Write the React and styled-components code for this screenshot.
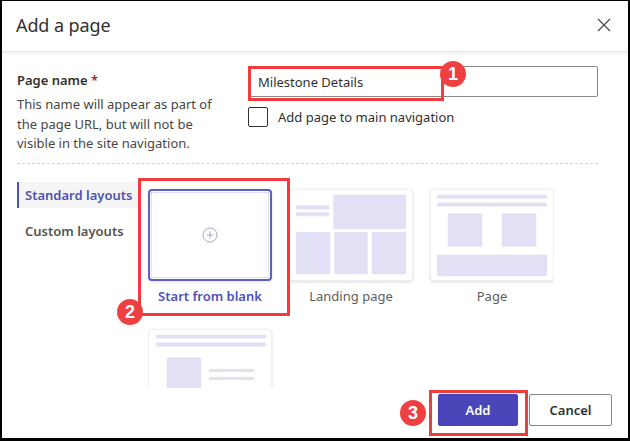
import React from "react";
import styled, { createGlobalStyle } from "styled-components";

const Global = createGlobalStyle`
  html, body { margin: 0; padding: 0; background: #fff; }
  body { font-family: "Noto Sans", "Liberation Sans", sans-serif; color: #323130; }
  * { box-sizing: border-box; }
`;

const Frame = styled.div`
  position: relative;
  width: 630px;
  height: 441px;
  border: 2px solid #000;
  border-top-width: 1px;
  border-bottom-width: 3px;
  display: flex;
  flex-direction: column;
  overflow: hidden;
  background: #fff;
`;

const Header = styled.header`
  height: 51px;
  flex: none;
  display: flex;
  align-items: center;
  justify-content: space-between;
  padding: 0 14px 2px 14px;
  border-bottom: 1px solid #e6e6e6;
  box-shadow: 0 2px 3px rgba(0, 0, 0, 0.06);
`;

const Title = styled.h1`
  margin: 0;
  font-size: 18px;
  font-weight: 400;
  color: #323130;
  letter-spacing: -0.1px;
`;

const Close = styled.button`
  border: 0;
  background: none;
  padding: 0;
  width: 20px;
  height: 20px;
  display: flex;
  align-items: center;
  justify-content: center;
`;

const Body = styled.div`
  flex: 1;
  display: flex;
  flex-direction: column;
  padding: 14px 30px 0 15px;
  min-height: 0;
`;

const NameRow = styled.div`
  display: grid;
  grid-template-columns: 231px 1fr;
  padding-bottom: 9px;
  border-bottom: 1px dashed #d0d0d0;
`;

const Label = styled.div`
  font-size: 13px;
  font-weight: 600;
  color: #323130;
  margin-top: 5px;
  span { color: #a4262c; }
`;

const Desc = styled.p`
  margin: 6px 0 0;
  font-size: 13px;
  line-height: 19.5px;
  color: #484644;
`;

const Fields = styled.div`
  display: flex;
  flex-direction: column;
  gap: 10px;
`;

const Input = styled.div`
  height: 31px;
  border: 1px solid #8a8886;
  border-radius: 2px;
  padding: 0 9px;
  display: flex;
  align-items: center;
  font-size: 13px;
  color: #323130;
`;

const Check = styled.label`
  display: flex;
  align-items: center;
  gap: 10px;
  font-size: 13px;
  color: #323130;
`;

const Box = styled.span`
  width: 20px;
  height: 20px;
  border: 1px solid #323130;
  border-radius: 2px;
`;

const Layouts = styled.div`
  flex: 1;
  min-height: 0;
  display: flex;
  gap: 8px;
  padding-top: 18px;
  overflow: hidden;
`;

const Nav = styled.nav`
  width: 123px;
  flex: none;
  display: flex;
  flex-direction: column;
  gap: 10px;
`;

const NavItem = styled.div`
  height: 26px;
  display: flex;
  align-items: center;
  padding-left: 6px;
  font-size: 13px;
  font-weight: 600;
  color: ${(p) => (p.$active ? "#4f52b2" : "#555351")};
  background: ${(p) => (p.$active ? "#f5f5f5" : "transparent")};
  border-left: 2px solid ${(p) => (p.$active ? "#4f52b2" : "transparent")};
`;

const Grid = styled.div`
  display: grid;
  grid-template-columns: repeat(3, 124px);
  grid-auto-rows: 140px;
  column-gap: 17px;
  padding-top: 7px;
  height: 213px;
  overflow: hidden;
`;

const Tile = styled.div`
  display: flex;
  flex-direction: column;
  align-items: center;
  gap: 6px;
`;

const Card = styled.div`
  position: relative;
  width: 124px;
  height: 92px;
  border-radius: 4px;
  background: #fff;
  border: ${(p) => (p.$selected ? "2px solid #5b5fc7" : "1px solid #f0f0f0")};
  box-shadow: ${(p) => (p.$selected ? "0 1px 3px rgba(0,0,0,0.12)" : "0 1px 3px rgba(0,0,0,0.14)")};
  display: flex;
  align-items: center;
  justify-content: center;
  &::after {
    content: "";
    display: ${(p) => (p.$selected ? "block" : "none")};
    position: absolute;
    inset: 1px;
    border: 1px dotted #c9c7ee;
  }
`;

const TileLabel = styled.div`
  font-size: 13px;
  font-weight: ${(p) => (p.$active ? 600 : 400)};
  color: ${(p) => (p.$active ? "#4f52b2" : "#605e5c")};
`;

const Footer = styled.footer`
  height: 50px;
  flex: none;
  display: flex;
  justify-content: flex-end;
  align-items: flex-start;
  gap: 11px;
  padding: 6px 16px 0 0;
`;

const Button = styled.button`
  height: 32px;
  width: ${(p) => (p.$primary ? "80px" : "83px")};
  border-radius: 2px;
  font-family: inherit;
  font-size: 13px;
  font-weight: 600;
  border: 1px solid ${(p) => (p.$primary ? "#4a45b8" : "#8a8886")};
  background: ${(p) => (p.$primary ? "#4a45b8" : "#fff")};
  color: ${(p) => (p.$primary ? "#fff" : "#323130")};
`;

const Highlight = styled.div`
  position: absolute;
  left: ${(p) => p.$x}px;
  top: ${(p) => p.$y}px;
  width: ${(p) => p.$w}px;
  height: ${(p) => p.$h}px;
  border: 3px solid #f03c3c;
  pointer-events: none;
`;

const Badge = styled.div`
  position: absolute;
  left: ${(p) => p.$x - 13}px;
  top: ${(p) => p.$y - 13}px;
  width: 26px;
  height: 26px;
  border-radius: 50%;
  background: #ee4040;
  color: #fff;
  font-family: "Liberation Sans", Arial, sans-serif;
  font-weight: 700;
  font-size: 18px;
  display: flex;
  align-items: center;
  justify-content: center;
`;

const fill = "#e2e0f5";

function LandingArt() {
  return (
    <svg width="124" height="92" viewBox="0 0 124 92">
      <rect x="6" y="16" width="34" height="4" rx="1" fill={fill} />
      <rect x="6" y="23" width="34" height="4" rx="1" fill={fill} />
      <rect x="44" y="5" width="74" height="35" rx="1" fill={fill} />
      <rect x="6" y="43" width="35" height="43" rx="1" fill={fill} />
      <rect x="45" y="43" width="34" height="43" rx="1" fill={fill} />
      <rect x="83" y="43" width="35" height="43" rx="1" fill={fill} />
    </svg>
  );
}

function PageArt() {
  return (
    <svg width="124" height="92" viewBox="0 0 124 92">
      <rect x="6" y="5" width="112" height="4" rx="1" fill={fill} />
      <rect x="6" y="13" width="112" height="4" rx="1" fill={fill} />
      <rect x="17" y="24" width="35" height="34" rx="1" fill={fill} />
      <rect x="72" y="24" width="35" height="34" rx="1" fill={fill} />
      <rect x="6" y="66" width="112" height="22" rx="1" fill={fill} />
    </svg>
  );
}

function TextArt() {
  return (
    <svg width="124" height="92" viewBox="0 0 124 92">
      <rect x="7" y="5" width="112" height="4" rx="1" fill={fill} />
      <rect x="7" y="13" width="112" height="4" rx="1" fill={fill} />
      <rect x="18" y="28" width="35" height="50" rx="1" fill={fill} />
      <rect x="61" y="40" width="46" height="3" rx="1" fill={fill} />
      <rect x="61" y="48" width="46" height="3" rx="1" fill={fill} />
    </svg>
  );
}

export default function App() {
  return (
    <>
      <Global />
      <Frame>
        <Header>
          <Title>Add a page</Title>
          <Close aria-label="Close">
            <svg width="14" height="14" viewBox="0 0 14 14">
              <path d="M1 1 L13 13 M13 1 L1 13" stroke="#444" strokeWidth="1.1" />
            </svg>
          </Close>
        </Header>
        <Body>
          <NameRow>
            <div>
              <Label>
                Page name <span>*</span>
              </Label>
              <Desc>
                This name will appear as part of
                <br />
                the page URL, but will not be
                <br />
                visible in the site navigation.
              </Desc>
            </div>
            <Fields>
              <Input>Milestone Details</Input>
              <Check>
                <Box />
                Add page to main navigation
              </Check>
            </Fields>
          </NameRow>
          <Layouts>
            <Nav>
              <NavItem $active>Standard layouts</NavItem>
              <NavItem>Custom layouts</NavItem>
            </Nav>
            <Grid>
              <Tile>
                <Card $selected>
                  <svg width="16" height="16" viewBox="0 0 16 16">
                    <circle cx="8" cy="8" r="7" fill="none" stroke="#a7a5c9" strokeWidth="1" />
                    <path d="M8 4.5 V11.5 M4.5 8 H11.5" stroke="#a7a5c9" strokeWidth="1" />
                  </svg>
                </Card>
                <TileLabel $active>Start from blank</TileLabel>
              </Tile>
              <Tile>
                <Card>
                  <LandingArt />
                </Card>
                <TileLabel>Landing page</TileLabel>
              </Tile>
              <Tile>
                <Card>
                  <PageArt />
                </Card>
                <TileLabel>Page</TileLabel>
              </Tile>
              <Tile>
                <Card>
                  <TextArt />
                </Card>
              </Tile>
            </Grid>
          </Layouts>
        </Body>
        <Footer>
          <Button $primary>Add</Button>
          <Button>Cancel</Button>
        </Footer>
        <Highlight $x={246} $y={65} $w={196} $h={35} />
        <Badge $x={451} $y={73}>1</Badge>
        <Highlight $x={136} $y={177} $w={152} $h={138} />
        <Badge $x={128} $y={311}>2</Badge>
        <Highlight $x={427} $y={389} $w={99} $h={46} />
        <Badge $x={411} $y={412}>3</Badge>
      </Frame>
    </>
  );
}
